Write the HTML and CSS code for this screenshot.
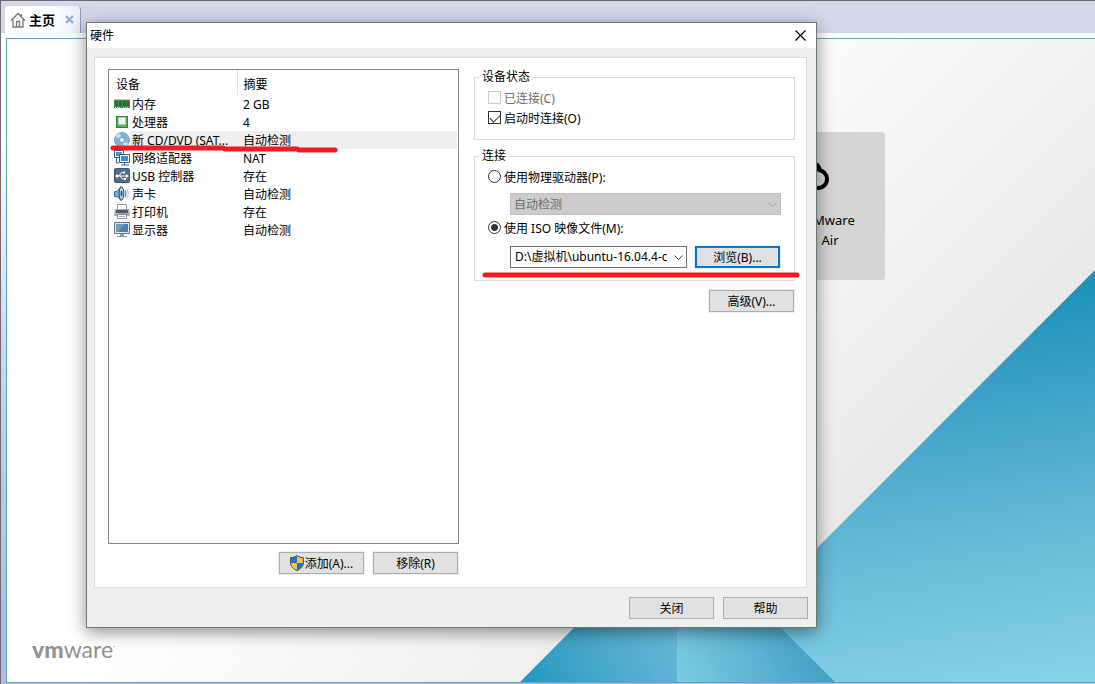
FILE: index.html
```html
<!DOCTYPE html>
<html lang="zh-CN">
<head>
<meta charset="utf-8">
<title>硬件</title>
<link rel="stylesheet" href="styles.css">
</head>
<body>
<main class="app">
  <nav class="tabs">
    <div class="tab">
      <svg class="home" viewBox="0 0 16 16" fill="none" stroke="#777" stroke-width="1.3"><path d="M1 8.5 8 1.5l7 7M3 7.5V15h10V7.500M6.500 15V9.500h3V15M11.500 2v3"/></svg>
      <a class="tab-name" href="#home">主页</a>
      <button class="tab-close" aria-label="关闭标签"><svg viewBox="0 0 9 9" stroke="#8fb3d0" stroke-width="2.400"><path d="M1 1l7 7M8 1 1 8"/></svg></button>
    </div>
  </nav>
  <section class="page" id="home">
    <svg class="scene" viewBox="7 39 1088 643" preserveAspectRatio="none">
      <defs>
        <linearGradient id="paper" gradientUnits="userSpaceOnUse" x1="380" y1="380" x2="720" y2="720"><stop offset="0" stop-color="#fff"/><stop offset="1" stop-color="#e7e7e7"/></linearGradient>
        <linearGradient id="sea" gradientUnits="userSpaceOnUse" x1="1000" y1="270" x2="1060" y2="682"><stop offset="0" stop-color="#168db6"/><stop offset=".65" stop-color="#69bbd8"/><stop offset="1" stop-color="#86d3e8"/></linearGradient>
        <linearGradient id="left" gradientUnits="userSpaceOnUse" x1="530" y1="690" x2="677" y2="630"><stop offset="0" stop-color="#2599c0"/><stop offset=".5" stop-color="#4ba9cb"/><stop offset="1" stop-color="#66b7d6"/></linearGradient>
        <linearGradient id="right" gradientUnits="userSpaceOnUse" x1="677" y1="682" x2="800" y2="630"><stop offset="0" stop-color="#7ccbe3"/><stop offset="1" stop-color="#48a3c7"/></linearGradient>
      </defs>
      <path fill="#fff" d="M7 39h1088v643H7z"/>
      <path fill="url(#paper)" d="M71 39h1024v643H71z"/>
      <path fill="url(#sea)" d="M1095 270v412H683z"/>
      <path fill="url(#left)" d="M520 682 677 524v158z"/>
      <path fill="url(#right)" d="M677 524v158h158z"/>
    </svg>
    <a class="card" href="#air">
      <svg class="cloud" viewBox="0 0 28 28" fill="none" stroke="#000" stroke-width="4"><path d="M2 26h11c5 0 9-4 9-9s-4-8-8-9"/><path fill="#000" stroke="none" d="M11 0c3 1 5 4 6 8l-6 2z"/></svg>
      <span>VMware</span><span>Air</span>
    </a>
    <div class="brand"><b>vm</b>ware<small>·</small></div>
  </section>
</main>

<div class="dialog" role="dialog" aria-labelledby="title">
  <header class="titlebar">
    <h1 id="title">硬件</h1>
    <button class="close" aria-label="关闭窗口"><svg viewBox="0 0 11 11" stroke="#000" stroke-width="1.200"><path d="M.5.500l10 10M10.500.500l-10 10"/></svg></button>
  </header>
  <div class="panel">
    <div class="devices">
      <div class="list">
        <table>
          <thead><tr><th>设备</th><th>摘要</th></tr></thead>
          <tbody>
            <tr><td><span class="device"><svg viewBox="0 0 16 16"><path fill="#2d9a35" d="M0 3h16v9H0z"/><path fill="#a5d6a0" d="M0 3h16v1H0z"/><path fill="#4c5150" d="M1 5h3v5H1zM5 5h3v5H5zM9 5h3v5H9zM13 5h2v5h-2z"/><path fill="#cfe3b2" d="M1 11h1v1H1zM3 11h1v1H3zM5 11h1v1H5zM9 11h1v1H9zM11 11h1v1h-1zM13 11h1v1h-1z"/></svg>内存</span></td><td>2 GB</td></tr>
            <tr><td><span class="device"><svg viewBox="0 0 16 16"><path fill="#258c34" d="M2 2h12v12H2z"/><path fill="#58b053" d="M3 3h10v10H3z"/><path fill="#f1f3f0" stroke="#b5c4b3" d="M4.500 3.500h7v7h-7z"/></svg>处理器</span></td><td>4</td></tr>
            <tr class="selected"><td><span class="device"><svg viewBox="0 0 16 16"><circle cx="8" cy="8" r="7.500" fill="#86b2d8" stroke="#78a4cb"/><path fill="#c7def1" d="M8 8 1.500 4.500A8 8 0 0 1 6 1zM8 8l6.500 3.500A8 8 0 0 1 10 15z"/><circle cx="8" cy="8" r="3" fill="#a9cbe6" stroke="#6f9dc6"/><circle cx="8" cy="8" r="1.400" fill="#fff"/></svg>新 CD/DVD (SAT...</span></td><td>自动检测</td></tr>
            <tr><td><span class="device"><svg viewBox="0 0 16 16"><path fill="#fff" stroke="#315e88" d="M.5.500h9v7h-9z"/><path fill="#4a9cda" d="M2 2h6v4H2z"/><path fill="#fff" stroke="#315e88" d="M5.500 4.500h10v8h-10z"/><path fill="#3c8ed0" d="M7 6h7v5H7z"/><path fill="none" stroke="#315e88" d="M10.500 13v2M7 15h8M2.500 8v5H5"/></svg>网络适配器</span></td><td>NAT</td></tr>
            <tr><td><span class="device"><svg viewBox="0 0 16 16"><rect x=".5" y=".5" width="15" height="14" rx="1" fill="#536d88" stroke="#3e566f"/><path fill="none" stroke="#fff" d="M3 8h10M5 8l2.500-3.500h2M6 8l2.500 3h2"/><path fill="#fff" d="m15 8-3-2v4zM9 3.500h2v2H9zM10 10h2v2h-2z"/><circle cx="3" cy="8" r="1.500" fill="#fff"/></svg>USB 控制器</span></td><td>存在</td></tr>
            <tr><td><span class="device"><svg viewBox="0 0 16 16"><path fill="#7fa9d0" stroke="#426f9c" d="M.5 5.500H3L7 .500c3 2 3 12 0 14L3 10.500H.5z"/><ellipse cx="7.500" cy="7.500" rx="2.300" ry="6.500" fill="#c9dded" stroke="#254f7e"/><ellipse cx="7.500" cy="7.500" rx="1" ry="3" fill="#254f7e"/><path fill="none" stroke="#4d93cb" stroke-width="1.200" d="M11 4q2 3.500 0 7"/><path fill="none" stroke="#9cc3e4" d="M13 2.500q3 5 0 10"/></svg>声卡</span></td><td>自动检测</td></tr>
            <tr><td><span class="device"><svg viewBox="0 0 16 16"><path fill="#fff" stroke="#9297a0" d="M3.500.500h9v6h-9z"/><path fill="#a9abb5" d="M1 5h14l1 7H0z"/><path fill="#555862" d="M2 6h12v3H2z"/><path fill="#fff" stroke="#8d91a0" d="M3.500 10.500h9v4h-9z"/><path stroke="#a6aabd" d="M5 12.500h6"/></svg>打印机</span></td><td>存在</td></tr>
            <tr><td><span class="device"><svg viewBox="0 0 16 16"><path fill="#dce5ec" stroke="#63798c" d="M.5.500h15v11H.5z"/><path fill="#4c7fac" d="M2 2h12v8H2z"/><path fill="#7099be" d="M2 2h9L4 10H2z"/><path fill="#8f9ba6" d="M6 12h4v2H6zM3 14h10v1H3z"/></svg>显示器</span></td><td>自动检测</td></tr>
          </tbody>
        </table>
      </div>
      <div class="actions">
        <button class="btn"><svg class="shield" viewBox="0 0 14 16"><path fill="#1878c8" d="M7 1 1 3v5c0 4 3 6 6 7.500C10 14 13 12 13 8V3z"/><path fill="#ffc13d" d="M7 1v7h6V3zM7 8v7.500C4 14 1 12 1 8z"/><path fill="none" stroke="#42525c" d="M7 .6Q4 3 .6 2.600V8c0 4 3 6 6.400 7.500C10.400 14 13.400 12 13.400 8V2.600Q10 3 7 .6z"/></svg>添加(A)...</button>
        <button class="btn">移除(R)</button>
      </div>
    </div>
    <div class="settings">
      <fieldset>
        <legend>设备状态</legend>
        <label class="option off"><input type="checkbox" disabled>已连接(C)</label>
        <label class="option"><input type="checkbox" checked>启动时连接(O)</label>
      </fieldset>
      <fieldset class="connection">
        <legend>连接</legend>
        <label class="option"><input type="radio" name="source">使用物理驱动器(P):</label>
        <div class="combo drive off">
          <select aria-label="物理驱动器" disabled><option>自动检测</option></select>
          <svg viewBox="0 0 9 5" fill="none" stroke="#a3a3a3"><path d="m.5.500 4 4 4-4"/></svg>
        </div>
        <label class="option"><input type="radio" name="source" checked>使用 ISO 映像文件(M):</label>
        <div class="file">
          <div class="combo">
            <select aria-label="ISO 映像文件"><option>D:\虚拟机\ubuntu-16.04.4-c</option></select>
            <svg viewBox="0 0 9 5" fill="none" stroke="#444"><path d="m.5.500 4 4 4-4"/></svg>
          </div>
          <button class="btn primary">浏览(B)...</button>
        </div>
      </fieldset>
      <button class="btn advanced">高级(V)...</button>
    </div>
  </div>
  <footer class="footer">
    <button class="btn">关闭</button>
    <button class="btn">帮助</button>
  </footer>
  <svg class="mark mark-device" viewBox="0 0 228 8" fill="none" stroke="#ed1c24" stroke-width="5" stroke-linecap="round"><path d="M3 3h110l2 1h72l2 1h36"/></svg>
  <svg class="mark mark-file" viewBox="0 0 318 6" fill="none" stroke="#ed1c24" stroke-width="5" stroke-linecap="round"><path d="M3 3h312"/></svg>
</div>
</body>
</html>
```
FILE: styles.css
```css
* { box-sizing: border-box; }
body {
  margin: 0;
  overflow: hidden;
  font: 12px/18px "Noto Sans", "Noto Sans CJK SC", sans-serif;
  color: #000;
}
button, select { font: inherit; color: inherit; }
button { padding: 0; border: 0; background: none; }
svg { display: block; }
a { color: inherit; text-decoration: none; }

.app {
  display: flex;
  flex-direction: column;
  height: 100vh;
  padding: 0 0 1px 5px;
  border: solid #6c6c70;
  border-width: 1px 0 0 1px;
  background: linear-gradient(#d4d8ec 32px, #fff 32px, #fff 130px, #c8cee8 400px, #b5bde0 600px);
}
.tabs { display: flex; align-items: flex-end; height: 32px; margin-left: -1px; flex: none; }
.tab {
  display: flex;
  align-items: center;
  height: 27px;
  padding: 0 6px 0 5px;
  border-right: 1px solid #8c9cc4;
  border-radius: 4px 4px 0 0;
  background: linear-gradient(90deg, #fff 60%, #eceef7);
}
.home { width: 16px; height: 16px; margin-right: 3px; }
.tab-name { font-size: 13px; font-weight: 700; }
.tab-close { margin-left: 10px; }
.tab-close svg { width: 9px; height: 9px; }

.page {
  position: relative;
  flex: 1;
  margin-top: 5px;
  border: solid #5ba4c8;
  border-width: 1px 0 1px 1px;
  overflow: hidden;
}
.scene { position: absolute; inset: 0; width: 100%; height: 100%; }
.card {
  position: absolute;
  top: 93px;
  left: 767px;
  width: 111px;
  height: 148px;
  padding: 30px 0 0 1px;
  border-radius: 3px;
  background: #d5d5d5;
  display: flex;
  flex-direction: column;
  align-items: center;
  font-size: 13px;
  line-height: 20px;
}
.cloud { width: 28px; height: 28px; margin: 0 22px 20px 0; }
.brand {
  position: absolute;
  left: 25px;
  bottom: 20px;
  font: 23px/26px Lato, sans-serif;
  color: #929292;
}
.brand b { font-weight: 900; }
.brand small { font-size: 8px; vertical-align: super; }

.dialog {
  position: absolute;
  top: 22px;
  left: 86px;
  width: 731px;
  max-width: calc(100vw - 96px);
  padding-bottom: 8px;
  border: 1px solid #687b6e;
  background: #efefef;
  box-shadow: 0 4px 16px rgba(0, 0, 0, .45);
}
.titlebar {
  display: flex;
  align-items: center;
  justify-content: space-between;
  height: 25px;
  padding: 0 10px 0 3px;
  background: #fff;
}
.titlebar h1 { margin: 0; font-size: 12px; font-weight: 400; line-height: 18px; }
.close svg { width: 11px; height: 11px; }
.panel {
  display: flex;
  gap: 15px;
  margin: 9px 9px 9px 7px;
  padding: 11px 11px 13px 13px;
  border: 1px solid #dcdcdc;
  background: #fff;
}
.devices { flex: 351; min-width: 0; }
.settings { flex: 321; min-width: 0; display: flex; flex-direction: column; }

.list { height: 475px; padding-right: 1px; border: 1px solid #828790; }
table { width: 100%; border-collapse: collapse; table-layout: fixed; }
th { height: 25px; padding: 4px 6px 0; font-weight: 400; text-align: left; }
th:first-child { width: 128px; border-right: 1px solid #e3e3e3; padding-left: 7px; }
td { height: 18px; padding: 2px 6px 0; line-height: 16px; white-space: nowrap; }
td:first-child { padding: 0 0 0 5px; }
.selected td { background: #efefef; }
.selected td:first-child { background: linear-gradient(90deg, #fff 21px, #efefef 21px); }
.device { display: flex; align-items: center; gap: 2px; height: 18px; padding-top: 2px; }
.device svg { width: 16px; height: 16px; margin-bottom: 2px; flex: none; }

.actions { display: flex; justify-content: flex-end; gap: 9px; margin: 8px 1px 0 0; }
.btn {
  display: flex;
  align-items: center;
  justify-content: center;
  width: 85px;
  height: 22px;
  padding-top: 2px;
  border: 1px solid #adadad;
  background: #e1e1e1;
  outline: 1px solid #f0f0f0;
}
.shield { width: 14px; height: 16px; margin: 0 1px 2px 0; }
.primary { border: 2px solid #0078d7; }
.advanced { align-self: flex-end; margin: 9px 1px 0 0; }

fieldset { min-width: 0; margin: 0; padding: 3px 13px 11px; border: 1px solid #dcdcdc; }
legend { margin-left: -9px; padding: 0 3px; line-height: 16px; }
.connection { margin-top: 8px; padding-bottom: 12px; }
.option { display: flex; align-items: center; gap: 3px; height: 20px; padding-top: 2px; }
.option.off { color: #6d6d6d; }
input {
  appearance: none;
  flex: none;
  width: 13px;
  height: 13px;
  margin: 0 0 3px;
  border: 1px solid #333;
  background: #fff;
}
input:disabled { border-color: #ccc; }
input[type="checkbox"]:checked::before {
  content: "";
  display: block;
  width: 9px;
  height: 5px;
  margin: 2px 0 0 1px;
  border: solid #333;
  border-width: 0 0 1px 1px;
  transform: rotate(-45deg);
}
input[type="radio"] { border-radius: 50%; }
input[type="radio"]:checked { background: radial-gradient(#333 3px, #fff 4px); }

.combo { display: grid; align-items: center; min-width: 0; }
.combo select, .combo svg { grid-area: 1 / 1; }
.combo select {
  appearance: none;
  width: 100%;
  height: 22px;
  padding: 0 19px 0 4px;
  border: 1px solid #707070;
  border-radius: 0;
  background: #fff;
}
.combo svg { justify-self: end; width: 9px; height: 5px; margin-right: 4px; pointer-events: none; }
.combo.off select { padding: 2px 19px 0 3px; border-color: #bfbfbf; background: #ccc; color: #6d6d6d; opacity: 1; }
.drive { margin: 6px 0 3px 22px; }
.file { display: flex; gap: 8px; margin: 8px 1px 0 22px; }
.file .combo { flex: 1; }
.file .btn { flex: none; }

.footer { display: flex; justify-content: flex-end; gap: 9px; padding-right: 8px; }
.footer .btn { outline: 0; }

.mark { position: absolute; pointer-events: none; }
.mark-device { top: 122px; left: 23px; width: 228px; height: 8px; }
.mark-file { top: 249px; left: 395px; width: 318px; height: 6px; }
```
